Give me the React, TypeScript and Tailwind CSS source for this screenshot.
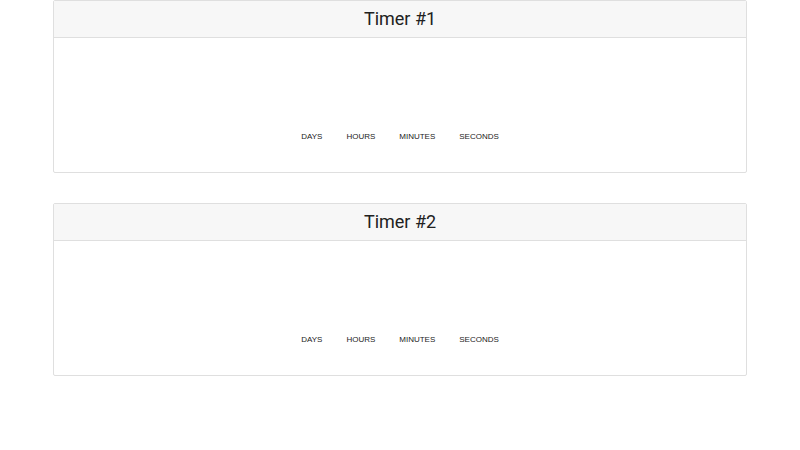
import React from "react";

function Timer({ title }: { title: string }) {
  return (
    <div className="mx-[53px] border border-[#dfdfdf] rounded-[2px] bg-white">
      <div className="h-[37px] bg-[#f7f7f7] border-b border-[#dfdfdf] flex items-center justify-center pb-[1px]">
        <h2 className="text-[18px] text-[#212121] leading-none" style={{ fontFamily: "Roboto, sans-serif" }}>{title}</h2>
      </div>
      <div className="h-[134px] flex items-start justify-center pt-[94px]">
        <div className="flex gap-[24px] text-[8px] text-[#222] uppercase leading-[10px]" style={{ fontFamily: "'Liberation Sans', Arial, sans-serif" }}>
          <span>Days</span>
          <span>Hours</span>
          <span>Minutes</span>
          <span>Seconds</span>
        </div>
      </div>
    </div>
  );
}

export default function App() {
  return (
    <div className="w-[800px] h-[450px] bg-white flex flex-col gap-[30px]">
      <Timer title="Timer #1" />
      <Timer title="Timer #2" />
    </div>
  );
}
